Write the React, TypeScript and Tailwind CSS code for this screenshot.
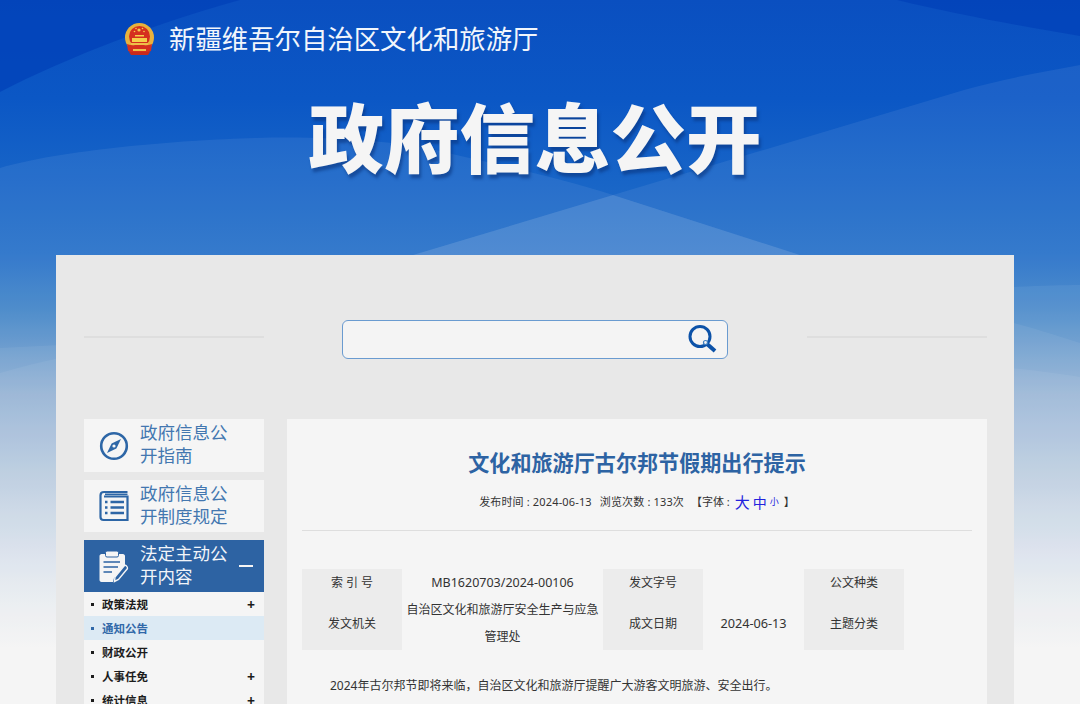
import { ReactNode } from "react";

const cjk = "font-['Noto_Sans','Noto_Sans_CJK_SC',sans-serif]";

const MenuList = [
  { id: 1, title: "政策法规", plus: true, active: false },
  { id: 2, title: "通知公告", plus: false, active: true },
  { id: 3, title: "财政公开", plus: false, active: false },
  { id: 4, title: "人事任免", plus: true, active: false },
  { id: 5, title: "统计信息", plus: true, active: false },
];

const Waves = () => (
  <svg className="absolute left-0 top-0" width="1080" height="704" viewBox="0 0 1080 704" aria-hidden="true">
    <defs>
      <linearGradient id="sky" x1="0" y1="0" x2="0" y2="1">
        <stop offset="0" stopColor="#0a4fc0" />
        <stop offset="0.14" stopColor="#0b57c5" />
        <stop offset="0.26" stopColor="#1865c7" />
        <stop offset="0.36" stopColor="#2670c9" />
        <stop offset="0.44" stopColor="#4285c8" />
        <stop offset="0.56" stopColor="#8aabd0" />
        <stop offset="0.7" stopColor="#bccde0" />
        <stop offset="0.82" stopColor="#e0e6ee" />
        <stop offset="0.92" stopColor="#f5f5f5" />
      </linearGradient>
    </defs>
    <rect width="1080" height="704" fill="url(#sky)" />
    <path d="M0 0H240C160 22 70 56 0 92Z" fill="#0040b8" fillOpacity="0.7" />
    <path d="M897 0H1080V36C1020 26 955 14 897 0Z" fill="#0040b8" fillOpacity="0.7" />
    <path d="M0 168C60 150 180 140 255 138C320 136 400 140 448 153C500 165 560 178 613 195L800 255V704H0Z" fill="#ffffff" fillOpacity="0.07" />
    <path d="M413 255L613 195L964 90C1000 80 1040 72 1080 65V704H413Z" fill="#ffffff" fillOpacity="0.07" />
    <path d="M413 255L613 195L800 255Z" fill="#ffffff" fillOpacity="0.07" />
    <path d="M0 348C20 347 40 346 60 345V704H0Z" fill="#ffffff" fillOpacity="0.06" />
    <path d="M0 373C20 367 40 362 60 358V704H0Z" fill="#ffffff" fillOpacity="0.06" />
    <path d="M1010 287C1040 286 1060 285 1080 285V704H1010Z" fill="#ffffff" fillOpacity="0.06" />
    <path d="M1010 322C1040 330 1060 337 1080 343V704H1010Z" fill="#ffffff" fillOpacity="0.06" />
    <path d="M1010 368C1040 371 1060 374 1080 377V704H1010Z" fill="#ffffff" fillOpacity="0.06" />
  </svg>
);

const Emblem = () => (
  <svg width="32" height="33" viewBox="0 0 32 33" aria-hidden="true">
    <circle cx="15.5" cy="14.5" r="14.5" fill="#e9b23c" />
    <circle cx="15.5" cy="13.5" r="10.5" fill="#d5301f" />
    <g fill="#f5d04a">
      <circle cx="15" cy="7" r="1.6" />
      <circle cx="10.5" cy="8.5" r="0.8" />
      <circle cx="12" cy="5.5" r="0.8" />
      <circle cx="18.5" cy="5.5" r="0.8" />
      <circle cx="20" cy="8.5" r="0.8" />
      <rect x="11" y="12" width="9" height="1.5" />
      <rect x="8" y="15" width="15" height="4" />
    </g>
    <path d="M3 21C8 23 23 23 28 21L27 28C22 31 9 31 4 28Z" fill="#d5301f" />
    <rect x="7" y="20" width="17" height="2" fill="#eec04a" />
    <path d="M5 29H26L24 32H7Z" fill="#c72a1c" />
    <rect x="9" y="26" width="13" height="2" fill="#eec04a" />
  </svg>
);

const CompassIcon = () => (
  <svg width="30" height="30" viewBox="0 0 30 30" fill="none" aria-hidden="true">
    <circle cx="15" cy="15" r="12.8" stroke="#2d66a6" strokeWidth="2.6" />
    <path d="M22 8L17.4 17.4L8 22L12.6 12.6Z" fill="#2d66a6" />
    <circle cx="15" cy="15" r="1.6" fill="#f5f5f5" />
  </svg>
);

const ListIcon = () => (
  <svg width="30" height="32" viewBox="0 0 30 32" fill="none" stroke="#2d66a6" aria-hidden="true">
    <path d="M28.5 2H5C2.8 2 1.5 3.4 1.5 5.2V27C1.5 29 2.8 30 4.5 30H28.5V6.5H5" strokeWidth="2.2" />
    <path d="M6 4.3H28.5" strokeWidth="1.6" />
    <path d="M11.5 12H25M11.5 17.5H25M11.5 23H25" strokeWidth="2.4" />
    <path d="M6 12H8.5M6 17.5H8.5M6 23H8.5" strokeWidth="2.4" />
  </svg>
);

const ClipboardIcon = () => (
  <svg width="30" height="33" viewBox="0 0 30 33" fill="none" aria-hidden="true">
    <path d="M2.5 4H24C25 4 26 5 26 6V16L15 28L14 32H2.5C1.5 32 0.5 31 0.5 30V6C0.5 5 1.5 4 2.5 4Z" fill="#f5f5f5" />
    <rect x="6.5" y="1" width="13" height="6" rx="1.5" fill="#f5f5f5" stroke="#2d63a3" />
    <path d="M4.5 12H21M4.5 17H19M4.5 22H13" stroke="#2d63a3" strokeWidth="1.6" />
    <path d="M27 15.5C28 16.5 29 17.5 28.5 18.5L19.5 29.5L15.5 31.5L16 27L25 16C25.6 15.4 26.4 15 27 15.5Z" fill="#2d63a3" stroke="#f5f5f5" strokeWidth="1.4" />
  </svg>
);

const SearchIcon = () => (
  <svg width="30" height="30" viewBox="0 0 30 30" fill="none" aria-hidden="true">
    <circle cx="12" cy="11.5" r="10" stroke="#0c52a8" strokeWidth="3" />
    <path d="M18.5 18.5L27 26" stroke="#0c52a8" strokeWidth="4" />
    <circle cx="17.5" cy="17.5" r="2" fill="#f4f4f4" stroke="#3f7fc0" strokeWidth="1.2" />
  </svg>
);

const SideItem = ({
  icon,
  lines,
  active,
  tall,
}: {
  icon: ReactNode;
  lines: string[];
  active?: boolean;
  tall?: boolean;
}) => (
  <div
    className={`flex items-center pl-[15px] pr-[11px] ${tall ? "h-[53px]" : "h-[52px]"} ${
      active ? "bg-[#2d63a3] text-[#f2f5f9]" : "bg-[#f5f5f5] text-[#4377b0]"
    }`}
  >
    <div className="flex w-[41px] shrink-0">{icon}</div>
    <div className={`flex-1 text-[17.5px] leading-[23px] ${tall ? "pb-1" : "pb-[2px]"}`}>
      {lines.map((line) => (
        <div key={line}>{line}</div>
      ))}
    </div>
    {active && <div className="h-[2px] w-[14px] bg-[#f5f5f5]" />}
  </div>
);

const App = () => {
  return (
    <div className={`relative h-[704px] w-[1080px] overflow-hidden ${cjk}`}>
      <Waves />
      <div className="relative">
        <header className="h-[255px]">
          <div className="flex items-center pl-[124px] pt-[22px]">
            <Emblem />
            <span className="ml-[13px] text-[26.4px] leading-[34px] text-[#f2f6fc]">新疆维吾尔自治区文化和旅游厅</span>
          </div>
          <h1 className="mt-[30px] pr-[10px] text-center text-[75.5px] font-black leading-[104px] text-[#f5f5f5] [text-shadow:2px_4px_3px_rgba(10,50,120,0.55)]">
            政府信息公开
          </h1>
        </header>

        <main className="ml-[56px] w-[958px] bg-[#e8e8e8] pl-7 pr-[27px] pt-[65px]">
          <div className="flex items-center justify-between">
            <div className="mb-[5px] h-[2px] w-[180px] bg-[#dedede]" />
            <div className="mr-[2px] flex h-[39px] w-[386px] items-center justify-end rounded-md border border-[#6a9bd0] bg-[#f4f4f4] pr-[9px]">
              <SearchIcon />
            </div>
            <div className="mb-[5px] h-[2px] w-[180px] bg-[#dedede]" />
          </div>

          <div className="mt-[60px] flex gap-[23px]">
            <aside className="flex w-[180px] shrink-0 flex-col gap-2">
              <SideItem icon={<CompassIcon />} lines={["政府信息公", "开指南"]} tall />
              <SideItem icon={<ListIcon />} lines={["政府信息公", "开制度规定"]} />
              <div>
                <SideItem icon={<ClipboardIcon />} lines={["法定主动公", "开内容"]} active />
                <ul className="bg-[#f5f5f5] text-[11.5px] font-bold">
                  {MenuList.map((item) => (
                    <li
                      key={item.id}
                      className={`flex h-6 items-center pl-[7px] pr-[9px] pt-px ${
                        item.active ? "bg-[#dceaf4] text-[#3068a8]" : "text-[#1c1c1c]"
                      }`}
                    >
                      <span className={`h-[3px] w-[3px] ${item.active ? "bg-[#3068a8]" : "bg-[#1c1c1c]"}`} />
                      <span className="ml-2 flex-1">{item.title}</span>
                      {item.plus && <span className="text-[14px] leading-none">+</span>}
                    </li>
                  ))}
                </ul>
              </div>
            </aside>

            <article className="h-[400px] w-[700px] bg-[#f5f5f5] px-[15px] pt-[29px]">
              <h2 className="text-center text-[21.1px] font-bold leading-[30px] text-[#2d63a3]">文化和旅游厅古尔邦节假期出行提示</h2>
              <p className="mt-[14px] flex h-[20px] items-center justify-center text-[11px] text-[#333]">
                <span className="tracking-[0.15px]">发布时间 : 2024-06-13</span>
                <span className="ml-[8px] tracking-[0.15px]">浏览次数 : 133次</span>
                <span className="ml-[7px]">【字体 : </span>
                <span className="ml-[5px] text-[15px] text-[#2222dd]">大</span>
                <span className="ml-[3px] text-[14px] text-[#2222dd]">中</span>
                <span className="ml-[3px] text-[9px] text-[#2222dd]">小</span>
                <span className="ml-[5px]">】</span>
              </p>
              <div className="mt-[18px] h-px bg-[#dedede]" />
              <table className="mt-[38px] w-[602px] table-fixed border-collapse text-center text-[12px] leading-[27px] text-[#333]">
                <colgroup>
                  <col className="w-[100px]" />
                  <col className="w-[201px]" />
                  <col className="w-[100px]" />
                  <col className="w-[101px]" />
                  <col className="w-[100px]" />
                </colgroup>
                <tbody>
                  <tr>
                    <th className="bg-[#ececec] font-normal">索 引 号</th>
                    <td className="text-[12.5px]">MB1620703/2024-00106</td>
                    <th className="bg-[#ececec] font-normal">发文字号</th>
                    <td></td>
                    <th className="bg-[#ececec] font-normal">公文种类</th>
                  </tr>
                  <tr>
                    <th className="bg-[#ececec] font-normal">发文机关</th>
                    <td>自治区文化和旅游厅安全生产与应急管理处</td>
                    <th className="bg-[#ececec] font-normal">成文日期</th>
                    <td className="text-[12.7px]">2024-06-13</td>
                    <th className="bg-[#ececec] font-normal">主题分类</th>
                  </tr>
                </tbody>
              </table>
              <p className="mt-[22px] pl-7 text-[12px] leading-[28px] text-[#333]">
                2024年古尔邦节即将来临，自治区文化和旅游厅提醒广大游客文明旅游、安全出行。
              </p>
            </article>
          </div>
        </main>
      </div>
    </div>
  );
};

export default App;
